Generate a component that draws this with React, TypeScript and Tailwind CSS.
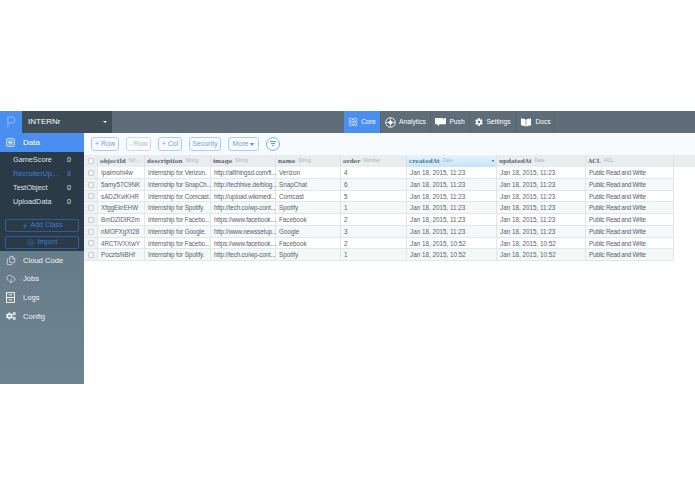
// Data browser screen: dark header, class sidebar, object table.
import { Files, CloudDownload, Atom, Plus, CirclePlay } from "lucide-react";
import { FaCog, FaCogs, FaBookOpen } from "react-icons/fa";

const COLUMNS = [
  { name: "objectId", type: "Stri...", width: "w-[47px]", cell: "" },
  { name: "description", type: "String", width: "w-[66px]", cell: "tracking-[-0.12px]" },
  { name: "image", type: "String", width: "w-[65px]", cell: "tracking-[-0.15px]" },
  { name: "name", type: "String", width: "w-[65px]", cell: "" },
  { name: "order", type: "Number", width: "w-[66px]", cell: "" },
  { name: "createdAt", type: "Date", width: "w-[90px]", cell: "" },
  { name: "updatedAt", type: "Date", width: "w-[89px]", cell: "" },
  { name: "ACL", type: "ACL", width: "w-[88px]", cell: "tracking-[-0.28px]" },
];

const ROWS = [
  ["Ipalmohi4w", "Internship for Verizon.", "http://allthingsd.com/fi...", "Verizon", "4", "Jan 18, 2015, 11:23"],
  ["5amy57C9NK", "Internship for SnapCh...", "http://techhive.de/blog...", "SnapChat", "6", "Jan 18, 2015, 11:23"],
  ["sADZKviKHR", "Internship for Comcast.", "http://upload.wikimedi...", "Comcast", "5", "Jan 18, 2015, 11:23"],
  ["XfggEkrEHW", "Internship for Spotify.", "http://tech.co/wp-cont...", "Spotify", "1", "Jan 18, 2015, 11:23"],
  ["BmDZiDIR2m", "Internship for Facebo...", "https://www.facebook....", "Facebook", "2", "Jan 18, 2015, 11:23"],
  ["nMOFXgXt28", "Internship for Google.", "http://www.newssetup...", "Google", "3", "Jan 18, 2015, 11:23"],
  ["4RCTiVXXwY", "Internship for Facebo...", "https://www.facebook....", "Facebook", "2", "Jan 18, 2015, 10:52"],
  ["PocztsNBHf", "Internship for Spotify.", "http://tech.co/wp-cont...", "Spotify", "1", "Jan 18, 2015, 10:52"],
];

const CLASSES = [
  { name: "GameScore", count: 0 },
  { name: "RecruiterUp...", count: 8, active: true },
  { name: "TestObject", count: 0 },
  { name: "UploadData", count: 0 },
];

function AnalyticsIcon() {
  return (
    <svg viewBox="0 0 12 12" className="w-[11px] h-[11px]" fill="none" stroke="white">
      <circle cx="6" cy="6" r="5.2" strokeWidth="1" />
      <path d="M1 6h10M6 1v10" strokeWidth="0.7" />
      <path d="M6 3.2 8.8 6 6 8.8 3.2 6z" fill="white" stroke="none" />
    </svg>
  );
}

function PushIcon() {
  return (
    <svg viewBox="0 0 12 10" className="w-[11px] h-[9px]" fill="white">
      <path d="M0 0h9v1.5h1V0h2v7H5L3 9.5V7H0z" />
    </svg>
  );
}

function DataIcon() {
  return (
    <svg viewBox="0 0 10 10" className="w-[9px] h-[9px]" fill="none" stroke="white" strokeWidth="0.9">
      <rect x="0.8" y="0.8" width="8.4" height="8.4" rx="0.8" />
      <path d="M2.6 3.4h4.8M2.6 5h4.8M2.6 6.6h4.8" />
    </svg>
  );
}

function LogsIcon() {
  return (
    <svg viewBox="0 0 10 12" className="w-[9px] h-[11px]" fill="none" stroke="white" strokeWidth="1">
      <rect x="0.6" y="0.6" width="8.8" height="10.8" />
      <path d="M0.6 6h8.8M3 3h4M3 8.6h4" />
    </svg>
  );
}

function Logo() {
  return (
    <svg viewBox="0 0 10 12" className="w-[9px] h-[12px]" fill="none" stroke="#a9cdfa" strokeWidth="0.8">
      <path d="M1 12V0.6h4.5a3.2 3.2 0 0 1 0 6.6H1" />
    </svg>
  );
}

const NAV = [
  { label: "Core", icon: <Atom className="w-[10px] h-[10px]" strokeWidth={1.6} />, active: true, width: "w-[37px]" },
  { label: "Analytics", icon: <AnalyticsIcon />, width: "w-[50px]" },
  { label: "Push", icon: <PushIcon />, width: "w-[39px]" },
  { label: "Settings", icon: <FaCog className="w-[8px] h-[8px]" />, width: "w-[47px]" },
  { label: "Docs", icon: <FaBookOpen className="w-[12px] h-[9px]" />, width: "w-[38px]" },
];

const SIDE_LINKS = [
  { label: "Cloud Code", icon: <Files className="w-[10px] h-[11px]" strokeWidth={1.6} /> },
  { label: "Jobs", icon: <CloudDownload className="w-[10px] h-[10px]" strokeWidth={1.6} /> },
  { label: "Logs", icon: <LogsIcon /> },
  { label: "Config", icon: <FaCogs className="w-[10px] h-[10px]" /> },
];

function Checkbox() {
  return <span className="block w-[6px] h-[6px] rounded-[1px] border border-[#c9cfd3] bg-[#f1f3f4]" />;
}

function ToolButton({ label, width, dim }: { label: string; width: string; dim?: boolean }) {
  return (
    <span className={`${width} h-[14px] flex items-center justify-center rounded-[3px] border text-[7px] ${dim ? "border-[#d5d9dc] text-[#b5bcc2]" : "border-[#a9ccf5] text-[#6ba3e6]"}`}>
      {label}
    </span>
  );
}

export default function App() {
  return (
    <div className="w-[695px] h-[494px] bg-white overflow-hidden font-['Liberation_Sans',Arial,sans-serif]">
      <div className="h-[111px]" />
      <header className="h-[22px] bg-[#5e6d78] flex">
        <div className="w-[22px] bg-[#4a8ff0] flex items-center justify-center"><Logo /></div>
        <div className="w-[90px] bg-[#3f4d57] flex items-center justify-between pl-[6px] pr-[5px] text-white text-[8px]">
          <span>INTERNr</span>
          <span className="w-0 h-0 border-x-[2px] border-t-[2px] border-x-transparent border-t-white" />
        </div>
        <nav className="ml-auto mr-[140px] flex">
          {NAV.map((n) => (
            <div key={n.label} className={`${n.width} flex items-center justify-center gap-[3px] text-[6.7px] text-white border-r border-[#566570] ${n.active ? "bg-[#4a8ff0]" : ""}`}>
              {n.icon}
              {n.label}
            </div>
          ))}
        </nav>
      </header>
      <div className="flex items-start">
        <aside className="w-[84px] h-[251px] shrink-0 bg-linear-to-b from-[#5f7481] to-[#6e8491] flex flex-col">
          <div className="h-[19px] bg-[#4a8ff0] flex items-center pl-[6px] gap-[8px] text-white text-[8px]">
            <DataIcon />
            Data
          </div>
          <div className="h-[99px] bg-[#2a3a47] flex flex-col pt-[1px]">
            {CLASSES.map((c) => (
              <div key={c.name} className={`h-[14px] flex items-center justify-between px-[13px] text-[7.3px] ${c.active ? "text-[#3f7fd8]" : "text-[#dfe4e7]"}`}>
                <span>{c.name}</span>
                <span>{c.count}</span>
              </div>
            ))}
            <div className="mt-[10px] mx-[5px] h-[13px] rounded-[2px] border border-[#2f5f96] text-[#3f7fd8] text-[7px] flex items-center justify-center gap-[3px]">
              <Plus className="w-[6px] h-[6px]" strokeWidth={2.5} />
              Add Class
            </div>
            <div className="mt-[4px] mx-[5px] h-[13px] rounded-[2px] border border-[#2f5f96] text-[#3f7fd8] text-[7px] flex items-center justify-center gap-[4px]">
              <CirclePlay className="w-[7px] h-[7px]" strokeWidth={1.5} />
              Import
            </div>
          </div>
          <div className="flex flex-col">
            {SIDE_LINKS.map((l) => (
              <div key={l.label} className="h-[18.7px] flex items-center text-[#eef2f4] text-[7.6px]">
                <span className="w-[21px] flex justify-center">{l.icon}</span>
                <span className="pl-[2px]">{l.label}</span>
              </div>
            ))}
          </div>
        </aside>
        <main className="flex-1 min-w-0">
          <div className="h-[22px] bg-[#f8fbfd] flex items-center pl-[7px] gap-[7px]">
            <ToolButton label="+ Row" width="w-[28px]" />
            <ToolButton label="- Row" width="w-[25px]" dim />
            <ToolButton label="+ Col" width="w-[24px]" />
            <ToolButton label="Security" width="w-[32px]" />
            <span className="w-[31px] h-[14px] flex items-center justify-center gap-[2px] rounded-[3px] border border-[#a9ccf5] text-[#6ba3e6] text-[7px]">
              More
              <span className="w-0 h-0 border-x-[2.5px] border-t-[3px] border-x-transparent border-t-[#4d8fe0]" />
            </span>
            <span className="w-[14px] h-[14px] rounded-full border border-[#7fb0ee] flex items-center justify-center">
              <svg viewBox="0 0 10 10" className="w-[8px] h-[8px]" fill="none" stroke="#4d8fe0" strokeWidth="1.2">
                <path d="M1 2h8M2.5 4.5h5M4 7h2" />
              </svg>
            </span>
          </div>
          <div className="h-[12px] flex bg-[#e9edef]">
            <div className="w-[14px] flex items-center justify-center border-r border-[#dbe1e4]"><Checkbox /></div>
            {COLUMNS.map((c) => (
              <div key={c.name} className={`${c.width} shrink-0 relative flex items-center gap-[3px] pl-[2px] border-r border-[#dbe1e4] whitespace-nowrap overflow-hidden ${c.name === "createdAt" ? "bg-linear-to-b from-[#e6f3fb] to-[#c6e4f8]" : ""}`}>
                <span className={`font-['DejaVu_Serif',serif] font-bold text-[5.7px] tracking-[-0.05px] ${c.name === "createdAt" ? "text-[#4b7f9c]" : "text-[#5f6b74]"}`}>{c.name}</span>
                <span className="text-[4.8px] text-[#aab2b8]">{c.type}</span>
                {c.name === "createdAt" && <span className="absolute right-[2px] top-[5px] w-0 h-0 border-x-[1.5px] border-t-[2px] border-x-transparent border-t-[#3d4a54]" />}
              </div>
            ))}
          </div>
          {ROWS.map((r, i) => (
            <div key={r[0]} className={`h-[11.75px] flex w-[590px] text-[6.3px] text-[#58636b] border-b border-[#e1e6e9] ${i % 2 ? "bg-[#f4f8f9]" : "bg-white"}`}>
              <div className="w-[14px] bg-[#eff2f4] flex items-center justify-center border-r border-[#e1e6e9] pt-[1px]"><Checkbox /></div>
              {[...r, r[5], "Public Read and Write"].map((v, j) => (
                <div key={j} className={`${COLUMNS[j].width} ${COLUMNS[j].cell} shrink-0 flex items-center pl-[3px] pt-[1px] border-r border-[#e1e6e9] whitespace-nowrap`}>{v}</div>
              ))}
            </div>
          ))}
        </main>
      </div>
    </div>
  );
}
